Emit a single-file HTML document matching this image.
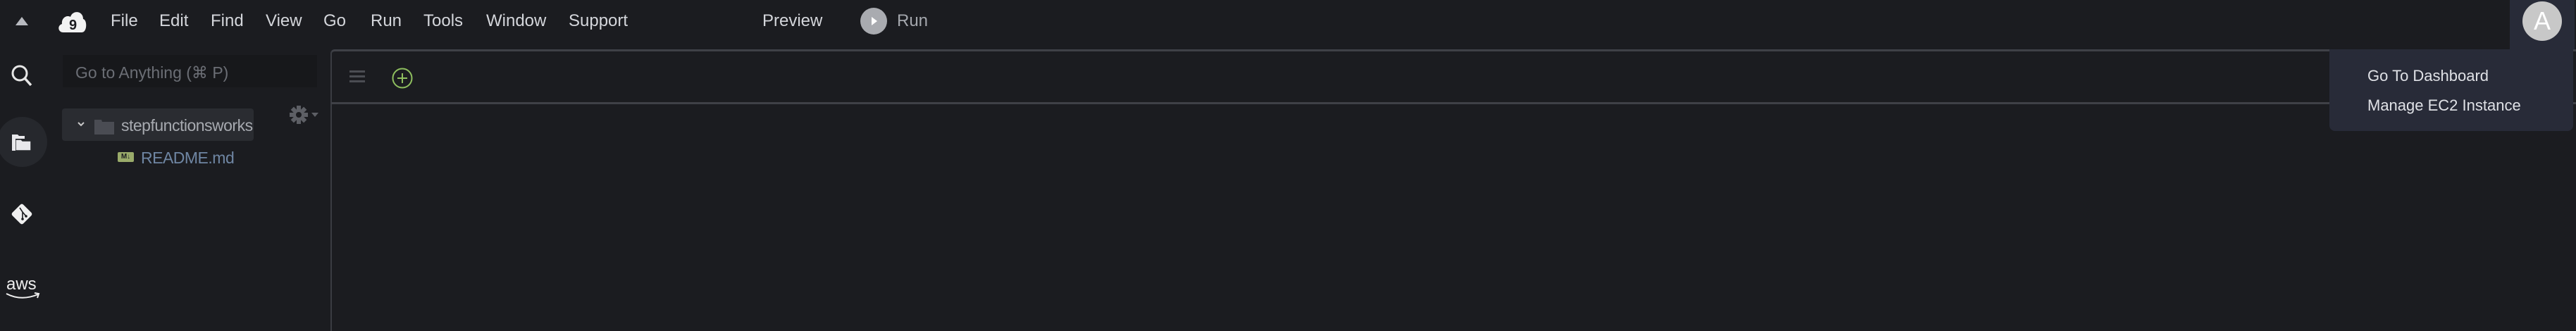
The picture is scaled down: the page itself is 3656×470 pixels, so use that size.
<!DOCTYPE html>
<html><head><meta charset="utf-8"><style>
*{margin:0;padding:0;box-sizing:border-box}
body{width:3656px;height:444px;background:#1b1c20;position:relative;overflow:hidden;font-family:"Liberation Sans",sans-serif}
.a{position:absolute}
.m{position:absolute;top:15px;font-size:24px;color:#d4d6db;line-height:30px}
</style></head><body>
<svg class="a" style="left:20px;top:22px" width="22" height="16"><polygon points="11,2 20,14 2,14" fill="#b8bac0"/></svg>
<svg class="a" style="left:80px;top:12px" width="44" height="36" viewBox="0 0 44 36"><path d="M10 34 C2 34 1 24 8 22 C7 13 15 9 20 12 C23 2 38 3 38 15 C44 16 44 34 36 34 Z" fill="#f2f2f2"/><text x="18" y="30" font-size="20" font-weight="bold" fill="#1b1c20" font-family="Liberation Sans">9</text></svg>
<div class="m" style="left:157px">File</div>
<div class="m" style="left:226px">Edit</div>
<div class="m" style="left:299px">Find</div>
<div class="m" style="left:377px">View</div>
<div class="m" style="left:459px">Go</div>
<div class="m" style="left:526px">Run</div>
<div class="m" style="left:601px">Tools</div>
<div class="m" style="left:690px">Window</div>
<div class="m" style="left:807px">Support</div>
<div class="m" style="left:1082px">Preview</div>
<div class="a" style="left:1221px;top:11px;width:38px;height:38px;border-radius:50%;background:#a9abb0"></div>
<svg class="a" style="left:1235px;top:23px" width="12" height="14"><polygon points="2,1 10,7 2,13" fill="#fff"/></svg>
<div class="m" style="left:1273px;color:#a4a7ad">Run</div>
<div class="a" style="left:3562px;top:0;width:92px;height:70px;background:#282b38"></div>
<div class="a" style="left:3580px;top:2px;width:56px;height:56px;border-radius:50%;background:#c8c8c8;color:#fff;font-size:36px;text-align:center;line-height:56px">A</div>
<svg class="a" style="left:14px;top:90px" width="34" height="34" viewBox="0 0 34 34"><circle cx="14" cy="14" r="10" fill="none" stroke="#e6e6e6" stroke-width="3"/><line x1="21" y1="21" x2="30" y2="31" stroke="#e6e6e6" stroke-width="3.5"/></svg>
<div class="a" style="left:-4px;top:166px;width:71px;height:71px;border-radius:50%;background:#26282d"></div>
<svg class="a" style="left:16px;top:189px" width="30" height="26" viewBox="0 0 30 26"><path d="M1 2h8l2 2h8v4H1z" fill="#e8e8ec"/><path d="M6 9h8l2 2h12v14H6z" fill="#e8e8ec" stroke="#26282d" stroke-width="1.5"/><path d="M1 8h5v17H1z" fill="#e8e8ec"/></svg>
<svg class="a" style="left:12px;top:285px" width="38" height="38" viewBox="0 0 38 38"><rect x="8" y="8" width="22" height="22" rx="3" transform="rotate(45 19 19)" fill="#f0f0f0"/><path d="M16 10l4 6v10M20 16l5 6" stroke="#1b1c20" stroke-width="1.6" fill="none"/><circle cx="20" cy="26" r="1.8" fill="#1b1c20"/><circle cx="25" cy="22" r="1.8" fill="#1b1c20"/></svg>
<div class="a" style="left:9px;top:392px;font-size:24px;color:#eee;line-height:24px">aws</div>
<svg class="a" style="left:8px;top:414px" width="50" height="14"><path d="M1 3 Q22 14 46 4" stroke="#eee" stroke-width="2" fill="none"/><path d="M41 2l6 1-2 6" stroke="#eee" stroke-width="2" fill="none"/></svg>
<div class="a" style="left:89px;top:78px;width:361px;height:46px;background:#17181b"></div>
<div class="a" style="left:107px;top:90px;font-size:23px;color:#6b6e75;line-height:26px">Go to Anything (⌘ P)</div>
<div class="a" style="left:88px;top:154px;width:272px;height:46px;background:#2a2c31;border-radius:4px;overflow:hidden">
<svg class="a" style="left:21px;top:17px" width="12" height="10"><path d="M2 3l4 4 4-4" stroke="#c8c8c8" stroke-width="2" fill="none"/></svg>
<svg class="a" style="left:46px;top:13px" width="28" height="24"><path d="M0 3h10l1 3h17v18H0z" fill="#4a4c53"/></svg>
<div class="a" style="left:84px;top:10px;font-size:23px;color:#a7aab0;white-space:nowrap;line-height:28px;letter-spacing:-0.5px">stepfunctionsworkshop</div>
</div>
<svg class="a" style="left:410px;top:149px" width="48" height="28" viewBox="0 0 48 28"><g transform="translate(14,14)" fill="#5d5f65"><circle r="8"/><g><rect x="-3" y="-13" width="6" height="26"/><rect x="-3" y="-13" width="6" height="26" transform="rotate(45)"/><rect x="-3" y="-13" width="6" height="26" transform="rotate(90)"/><rect x="-3" y="-13" width="6" height="26" transform="rotate(135)"/></g><circle r="4" fill="#1b1c20"/></g><polygon points="32,11 42,11 37,17" fill="#5d5f65"/></svg>
<div class="a" style="left:167px;top:216px;width:23px;height:14px;background:#9aab6a;border-radius:2px;font-size:10px;font-weight:bold;color:#1b1c20;text-align:center;line-height:14px">M↓</div>
<div class="a" style="left:200px;top:210px;font-size:23px;color:#6f86a3;line-height:28px;letter-spacing:-0.5px">README.md</div>
<div class="a" style="left:469px;top:70px;width:3200px;height:400px;border-left:2px solid #3a3c42;border-top:3px solid #3f4147;border-top-left-radius:6px"></div>
<div class="a" style="left:470px;top:145px;width:3200px;height:3px;background:#3f4147"></div>
<svg class="a" style="left:496px;top:99px" width="22" height="20"><rect y="1" width="22" height="3" fill="#4b4d53"/><rect y="8" width="22" height="3" fill="#4b4d53"/><rect y="15" width="22" height="3" fill="#4b4d53"/></svg>
<svg class="a" style="left:555px;top:95px" width="32" height="32"><circle cx="16" cy="16" r="13.5" fill="none" stroke="#8fbf5f" stroke-width="2"/><path d="M16 9v14M9 16h14" stroke="#8fbf5f" stroke-width="2"/></svg>
<div class="a" style="left:3306px;top:70px;width:346px;height:116px;background:#282b38;border-radius:0 0 8px 8px"></div>
<div class="a" style="left:3360px;top:95px;font-size:22px;color:#dfe1e6;line-height:26px">Go To Dashboard</div>
<div class="a" style="left:3360px;top:137px;font-size:22px;color:#dfe1e6;line-height:26px">Manage EC2 Instance</div>
</body></html>
